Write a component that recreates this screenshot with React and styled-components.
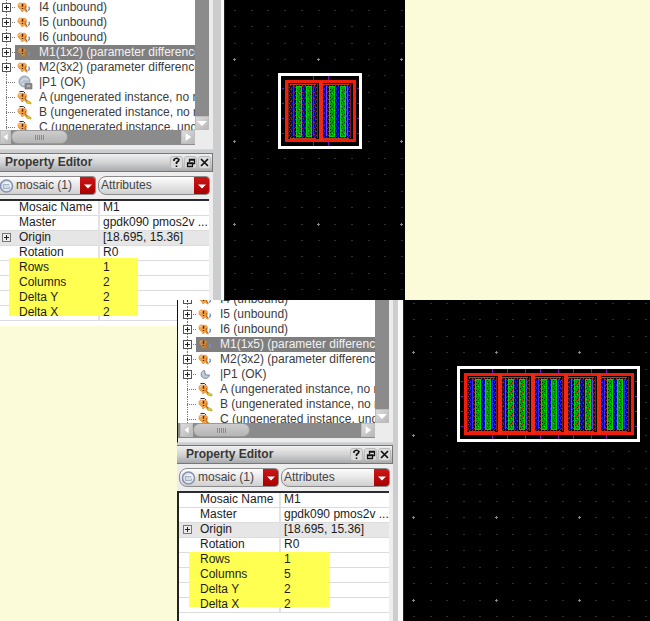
import React from "react";
import styled, { createGlobalStyle, css } from "styled-components";

const GlobalStyle = createGlobalStyle`
  * { box-sizing: border-box; }
  body {
    margin: 0;
    background: #fbfbd9;
    color: #2c2c2c;
    font: 12px/15px "Liberation Sans", Arial, sans-serif;
  }
  button, select { font: inherit; color: inherit; margin: 0; }
`;

const Stage = styled.main`
  display: grid;
  grid-template-columns: 177px 228px 1fr;
  grid-template-rows: auto 26px 1fr;
  min-height: 100vh;
  overflow: hidden;
`;

const Capture = styled.section`
  display: flex;
  min-width: 0;
  isolation: isolate;
  ${(p) =>
    p.$front
      ? css`
          grid-column: 2 / 4;
          grid-row: 2 / 4;
        `
      : css`
          grid-column: 1 / 3;
          grid-row: 1 / 3;
        `}
`;

const Dock = styled.div`
  display: flex;
  flex: none;
  background: #cbcdcf;
  border-right: ${(p) => (p.$front ? "5px solid #fafafa" : "3px solid #fafafa")};
`;

const DockBody = styled.div`
  display: flex;
  flex-direction: column;
  width: ${(p) => (p.$front ? "216px" : "213px")};
  margin-right: ${(p) => (p.$front ? "5px" : "8px")};
`;

const TreePane = styled.div`
  display: grid;
  grid-template-columns: 1fr 14px;
  grid-template-rows: ${(p) => (p.$front ? "123px" : "130px")} 15px;
  padding-right: 4px;
  padding-bottom: 4px;
  background: #ececec;
  border-left: ${(p) => (p.$front ? "1px solid #111" : "0")};
  border-bottom: 1px solid #d6d7d8;
`;

const TreeView = styled.div`
  overflow: hidden;
  background: #fff;
  padding-left: ${(p) => (p.$front ? "3px" : "0")};
`;

const Tree = styled.ul`
  list-style: none;
  margin: ${(p) => (p.$scrolled ? "-8px 0 0" : "0")};
  padding: 0;
`;

const TreeRow = styled.li`
  display: flex;
  height: 15px;
  white-space: nowrap;
`;

const Branch = styled.div`
  flex: none;
  display: flex;
  align-items: center;
  width: 15px;
  padding-left: 2px;
  background:
    repeating-linear-gradient(to bottom, #777 0 1px, transparent 1px 2px) 6px 0 / 1px 100% no-repeat,
    repeating-linear-gradient(to right, #777 0 1px, transparent 1px 2px) 6px 7px / 9px 1px no-repeat;
`;

const PlusButton = styled.button`
  display: block;
  width: 9px;
  height: 9px;
  padding: 0;
  border: 1px solid ${(p) => (p.$soft ? "#777" : "#555")};
  background:
    linear-gradient(#222, #222) center / 5px 1px no-repeat,
    linear-gradient(#222, #222) center / 1px 5px no-repeat,
    ${(p) => (p.$soft ? "#ececec" : "#fff")};
`;

const TreeLabel = styled.div`
  display: flex;
  align-items: center;
  flex: 1;
  gap: 6px;
  padding-left: 2px;
  color: ${(p) => (p.$selected ? "#f2f2f2" : "#3c3c3c")};
  background: ${(p) => (p.$selected ? "#7f7f7f" : "transparent")};
  svg { flex: none; }
`;

const VTrack = styled.div`
  display: flex;
  flex-direction: column;
  justify-content: flex-end;
  background: #8b8b8b;
`;

const HTrack = styled.div`
  display: flex;
  background: #8b8b8b;
  padding-left: ${(p) => (p.$front ? "2px" : "0")};
`;

const ArrowButton = styled.button`
  display: flex;
  flex: none;
  align-items: center;
  justify-content: center;
  width: ${(p) => p.$width || "14px"};
  height: 14px;
  padding: 0;
  border: 1px solid #bdbdbd;
  background: linear-gradient(135deg, #dcdcdc, #b8b8b8);
`;

const Thumb = styled.div`
  display: flex;
  align-items: center;
  justify-content: center;
  gap: 1px;
  width: 57px;
  height: 14px;
  margin-right: auto;
  border: 1px solid #999;
  border-radius: 7px;
  background: linear-gradient(#cdcdcd, #b5b5b5);
  i {
    width: 1px;
    height: 5px;
    background: #8a8a8a;
  }
`;

const TitleBar = styled.header`
  display: flex;
  align-items: center;
  gap: 1px;
  height: 19px;
  margin-top: ${(p) => (p.$front ? "2px" : "3px")};
  padding: 0 1px 0 ${(p) => (p.$front ? "9px" : "5px")};
  border: 1px solid #777;
  border-left: 0;
  background: linear-gradient(#f0f0f0, #d2d3d4 50%, #a9aaab);
  h2 {
    flex: 1;
    margin: 0;
    font-size: 12px;
    line-height: 15px;
    color: #383838;
  }
`;

const TitleButton = styled.button`
  display: flex;
  align-items: center;
  justify-content: center;
  width: 13px;
  height: 13px;
  padding: 0;
  border: 1px solid #bbb;
  border-radius: 3px;
  background: #dcdcdc;
`;

const ComboRow = styled.div`
  display: flex;
  gap: 2px;
  height: 27px;
  padding: 4px 3px 4px ${(p) => (p.$front ? "2px" : "0")};
  background: #ededed;
`;

const Combo = styled.label`
  display: flex;
  align-items: center;
  flex: ${(p) => (p.$wide ? "1" : "none")};
  width: ${(p) => p.$width || "auto"};
  overflow: hidden;
  border: 1px solid #8b8b8b;
  border-left-width: ${(p) => (p.$cut ? "0" : "1px")};
  border-radius: ${(p) => (p.$cut ? "0 4px 4px 0" : "8px 4px 4px 8px")};
  background: linear-gradient(#fdfdfd, #e2e2e2 60%, #d0d0d0);
  padding-left: ${(p) => (p.$indent ? "2px" : "0")};
  svg { flex: none; }
`;

const Select = styled.select`
  flex: 1;
  min-width: 0;
  height: 17px;
  padding: 0 0 0 2px;
  border: 0;
  outline: 0;
  appearance: none;
  background: transparent;
  color: #444;
`;

const RedArrow = styled.span`
  display: flex;
  align-items: center;
  justify-content: center;
  width: 15px;
  height: 17px;
  background: linear-gradient(#cc1717, #a90000);
`;

const TableWrap = styled.div`
  flex: 1;
  position: relative;
  padding-right: 4px;
  padding-bottom: ${(p) => (p.$front ? "0" : "5px")};
  background: #fff;
  border-left: ${(p) => (p.$front ? "2px solid #222" : "0")};
  box-shadow: inset -4px 0 #efefef;
`;

const PropTable = styled.table`
  width: 100%;
  table-layout: fixed;
  border-spacing: 0;
  border-top: 2px solid #2a2a33;
  color: #1c1c1c;
`;

const PropRow = styled.tr`
  height: 15px;
  background: ${(p) => (p.$shaded ? "#e6e6e6" : "#fff")};
  th, td {
    height: 15px;
    padding: 0 0 1px;
    border-bottom: 1px solid #dcdcdc;
    line-height: 13px;
    font-weight: normal;
    text-align: left;
    white-space: nowrap;
  }
  th { width: ${(p) => (p.$front ? "102px" : "100px")}; border-right: 2px solid #e3e3e3; }
  td { padding-left: 3px; }
`;

const NameCell = styled.div`
  display: flex;
  align-items: center;
  gap: 8px;
  height: 13px;
  padding-left: ${(p) => (p.$front ? (p.$plus ? "4px" : "21px") : p.$plus ? "2px" : "19px")};
`;

const CellText = styled.span`
  position: relative;
  z-index: 1;
`;

const Marker = styled.div`
  position: absolute;
  top: ${(p) => (p.$front ? "61px" : "59px")};
  left: ${(p) => (p.$front ? "10px" : "9px")};
  width: ${(p) => (p.$front ? "140px" : "129px")};
  height: ${(p) => (p.$front ? "55px" : "58px")};
  background: #ffff52;
  pointer-events: none;
`;

const Canvas = styled.svg`
  display: block;
  flex: 1;
  min-width: 0;
  width: 0;
  align-self: stretch;
  background: #000;
  border-left: 1px solid #222;
  margin-bottom: ${(p) => (p.$front ? "0" : "26px")};
`;

function InstanceIcon({ warn, dim }) {
  return (
    <svg width="16" height="15" viewBox="0 0 16 15" aria-hidden="true">
      {warn && <path d="M2.500 1.500h4L8 3" stroke="#333" strokeWidth="1" fill="none" />}
      <path
        d="M1 5C1.500 2.500 4 2.500 5.500 3.500 8 2.500 10 4 9.500 6.500L9 8.500 10.500 12 9 12 7.500 10 6 11.500H4.500L4 9.500C2 9 .5 7 1 5Z"
        fill={dim ? "#c48b4a" : "#f5a347"}
        stroke={dim ? "#a4703f" : "#dd8530"}
        strokeWidth=".6"
      />
      <path d="M2 5.500c.5-1.500 1.500-1.500 2.500-1.500" stroke={dim ? "#d9b184" : "#ffe0a8"} fill="none" />
      <path d="M5.500 3.800v3M5.500 8v1" stroke="#552400" strokeWidth="1.400" />
      <path d="M8.500 6 8 9l2 2" stroke="#b9631c" strokeWidth="1" fill="none" />
      {warn ? (
        <path d="m9.500 13 1-2.500 3.500 2v1.500Z" fill="#ecd61a" stroke="#9a8a14" strokeWidth=".6" />
      ) : (
        <path d="M11.500 7c1.300.5 1.300 2.500-.5 3.500" stroke="#7890c4" strokeWidth="1.400" fill="none" />
      )}
    </svg>
  );
}

function PinIcon({ crescent }) {
  return (
    <svg width="16" height="15" viewBox="0 0 16 15" aria-hidden="true">
      {crescent ? (
        <path d="M6.500 3.500c-3 .5-4 3-3 5.500 1.500 3.500 7.500 3 8-1L7.500 8Z" fill="#c3cadc" stroke="#7d879f" />
      ) : (
        <>
          <circle cx="7.500" cy="6.500" r="5.500" fill="#b9c2cf" stroke="#929daf" />
          <path d="M4 7c1-3 5-4 7-2M5 9h4" stroke="#e5eaf2" fill="none" />
          <path d="M8 8.500h7v5.500H8Z" fill="#8b8b8b" stroke="#6c6c6c" strokeWidth=".6" />
          <path d="M10 10h3v2h-3Z" fill="#b7b7b7" />
        </>
      )}
    </svg>
  );
}

function MosaicIcon() {
  return (
    <svg width="14" height="16" viewBox="0 0 14 16" aria-hidden="true">
      <circle cx="6.500" cy="8" r="6" fill="#dfe5ef" stroke="#8592b2" strokeWidth="1.500" />
      <path d="M3.500 6.500h6v4h-6Z" fill="#d3d9e6" stroke="#9aa4ba" strokeWidth=".8" />
      <path d="m5 5.500 5-.5v4" stroke="#fff" fill="none" />
    </svg>
  );
}

const arrows = {
  left: "M7 1v8L2 5Z",
  right: "M2 0v10l7-5Z",
  down: "M0 3h10L5 8Z",
};

function Arrow({ dir, size = 10 }) {
  return (
    <svg width={size} height={size} viewBox="0 0 10 10" aria-hidden="true">
      <path d={arrows[dir]} fill="#fff" />
    </svg>
  );
}

function GridDots({ originX, originY, stepX, stepY }) {
  const dots = [];
  for (let r = -4; r < 60; r++) {
    for (let c = -1; c < 90; c++) {
      const x = Math.round(originX + c * stepX);
      const y = Math.round(originY + r * stepY);
      if (x < 0 || y < 0) continue;
      dots.push(
        r % 5 === 0 && c % 5 === 0 ? (
          <path key={`${r}.${c}`} d={`M${x - 1} ${y}h3v1h-3zM${x} ${y - 1}h1v3h-1z`} fill="#858585" />
        ) : (
          <path key={`${r}.${c}`} d={`M${x} ${y}h2v1h-2z`} fill="#303030" />
        )
      );
    }
  }
  return <g>{dots}</g>;
}

function Textures() {
  return (
    <defs>
      <pattern id="poly" width="6" height="8" patternUnits="userSpaceOnUse">
        <path d="M0 0h6v8h-6z" fill="#00a400" />
        <path d="M1 0h1v1h-1zM3 1h1v1h-1zM1 3h1v1h-1zM4 3h1v1h-1zM2 5h1v1h-1zM0 6h1v1h-1zM4 7h1v1h-1z" fill="#002d00" />
        <path d="M4 0h1v1h-1zM2 2h1v1h-1zM5 5h1v1h-1z" fill="#c02a0c" />
        <path d="M0 1h1v1h-1zM3 4h1v1h-1z" fill="#25d90b" />
      </pattern>
      <pattern id="metal" width="4" height="6" patternUnits="userSpaceOnUse">
        <path d="M0 0h4v6h-4z" fill="#0808a8" />
        <path d="M1 0h1v2h-1zM3 3h1v2h-1z" fill="#2525ff" />
        <path d="M0 3h1v1h-1zM2 4h1v1h-1z" fill="#05001c" />
        <path d="M2 1h1v1h-1z" fill="#a01860" />
      </pattern>
      <pattern id="well" width="3" height="4" patternUnits="userSpaceOnUse">
        <path d="M0 0h3v4h-3z" fill="#140000" />
        <path d="M0 0h1v1h-1zM2 2h1v1h-1z" fill="#a82512" />
      </pattern>
    </defs>
  );
}

function MosaicCell({ x, spread, tint }) {
  const right = 15 + spread;
  return (
    <g transform={`translate(${x} 0)`}>
      <path d="M-7 12h28v53h-28z" fill="url(#well)" />
      <path d="M-6 11.500h26M-6 65.500h26" stroke="#b93c22" />
      <path d="M-7.500 11v54M21.500 11v54" stroke="#79200f" />
      <path d="M-5 13h4v51h-4zM6 13h4v51h-4zM16 13h4v51h-4z" fill="url(#metal)" />
      <path d={`M-2.500 13v50M${right + 2.5} 13v50`} stroke={tint} strokeWidth="1" />
      <rect x=".5" y="13.500" width="5" height="50" fill="url(#poly)" stroke="#00d500" />
      <rect x={10.5 + spread} y="13.500" width="5" height="50" fill="url(#poly)" stroke="#00d500" />
    </g>
  );
}

function Mosaic({ x, y, columns }) {
  const width = 18 + columns * 33;
  const ticks = [];
  for (let i = 0; i < columns - 1; i++) ticks.push(35 + i * 33, 50 + i * 33);
  return (
    <g transform={`translate(${x} ${y})`} shapeRendering="crispEdges">
      <rect width={width} height="76" fill="#000" />
      <path d={ticks.map((t) => `M${t + 0.5} 3v70`).join("")} stroke="#7b10b8" />
      <path d={`M4 15h2M4 30h2M4 45h2M4 60h2M${width - 5} 15h2M${width - 5} 30h2M${width - 5} 45h2M${width - 5} 60h2`} stroke="#7b10b8" />
      <rect x="7" y="7" width={width - 14} height="61" fill="#090000" />
      {Array.from({ length: columns }, (_, i) => (
        <MosaicCell key={i} x={18 + i * 33} spread={i % 2} tint={i % 2 ? "#6e3bff" : "#302cff"} />
      ))}
      <rect x="8.500" y="8.500" width={width - 16} height="59" fill="none" stroke="#f01c0c" strokeWidth="3" />
      {Array.from({ length: columns - 1 }, (_, i) => (
        <path key={i} d={`M${43 + i * 33} 8v60`} stroke="#f02814" strokeWidth="4" />
      ))}
      <rect x="1.500" y="1.500" width={width - 3} height="73" fill="none" stroke="#fff" strokeWidth="3" />
    </g>
  );
}

function TreeItem({ item }) {
  return (
    <TreeRow role="treeitem" aria-selected={!!item.selected}>
      <Branch>{item.plus && <PlusButton type="button" aria-label={`Expand ${item.text}`} />}</Branch>
      <TreeLabel $selected={item.selected}>
        {item.icon === "pin" || item.icon === "crescent" ? (
          <PinIcon crescent={item.icon === "crescent"} />
        ) : (
          <InstanceIcon warn={item.icon === "warn"} dim={item.selected} />
        )}
        <span>{item.text}</span>
      </TreeLabel>
    </TreeRow>
  );
}

function PropertyEditor({ rows, front }) {
  return (
    <>
      <TitleBar $front={front}>
        <h2>Property Editor</h2>
        <TitleButton type="button" aria-label="Help">
          <svg width="9" height="11" viewBox="0 0 9 11">
            <path d="M2 4V2.500Q4.500 0 7 2.500Q7 4 4.500 5.500V7M4.500 8.500v1.500" fill="none" stroke="#111" strokeWidth="1.600" />
          </svg>
        </TitleButton>
        <TitleButton type="button" aria-label="Float">
          <svg width="10" height="10" viewBox="0 0 10 10">
            <path d="M3.500 4V1.500h5v4H7M3 2h6M1.500 5h5v3.500h-5ZM1 5.500h6" fill="none" stroke="#111" strokeWidth="1.300" />
          </svg>
        </TitleButton>
        <TitleButton type="button" aria-label="Close">
          <svg width="9" height="9" viewBox="0 0 9 9">
            <path d="m1 1 7 7M8 1 1 8" stroke="#111" strokeWidth="1.700" />
          </svg>
        </TitleButton>
      </TitleBar>
      <ComboRow $front={front}>
        <Combo $width={front ? "100px" : "96px"} $cut={!front} $indent={front}>
          <MosaicIcon />
          <Select aria-label="Selected objects">
            <option>mosaic (1)</option>
          </Select>
          <RedArrow>
            <Arrow dir="down" size={8} />
          </RedArrow>
        </Combo>
        <Combo $wide>
          <Select aria-label="Property group">
            <option>Attributes</option>
          </Select>
          <RedArrow>
            <Arrow dir="down" size={8} />
          </RedArrow>
        </Combo>
      </ComboRow>
      <TableWrap $front={front}>
        <PropTable>
          <tbody>
            {rows.map(([name, value]) => (
              <PropRow key={name} $shaded={name === "Origin"} $front={front}>
                <th scope="row">
                  <NameCell $plus={name === "Origin"} $front={front}>
                    {name === "Origin" && <PlusButton $soft type="button" aria-label="Expand Origin" />}
                    <CellText>{name}</CellText>
                  </NameCell>
                </th>
                <td>
                  <CellText>{value}</CellText>
                </td>
              </PropRow>
            ))}
          </tbody>
        </PropTable>
        <Marker $front={front} />
      </TableWrap>
    </>
  );
}

function LayoutWindow({ front, tree, rows, columns, place, grid }) {
  return (
    <Capture $front={front}>
      <Dock $front={front}>
        <DockBody $front={front}>
          <TreePane $front={front}>
            <TreeView $front={front}>
              <Tree role="tree" $scrolled={front}>
                {tree.map((item) => (
                  <TreeItem key={item.text} item={item} />
                ))}
              </Tree>
            </TreeView>
            <VTrack>
              <ArrowButton type="button" aria-label="Scroll down">
                <Arrow dir="down" />
              </ArrowButton>
            </VTrack>
            <HTrack $front={front}>
              <ArrowButton type="button" aria-label="Scroll left" $width={front ? "13px" : "11px"}>
                <Arrow dir="left" size={8} />
              </ArrowButton>
              <Thumb>
                <i /><i /><i /><i /><i />
              </Thumb>
              <ArrowButton type="button" aria-label="Scroll right">
                <Arrow dir="right" size={8} />
              </ArrowButton>
            </HTrack>
          </TreePane>
          <PropertyEditor rows={rows} front={front} />
        </DockBody>
      </Dock>
      <Canvas $front={front} role="img" aria-label={`Layout with a 1 by ${columns} mosaic`}>
        <Textures />
        <GridDots {...grid} />
        <Mosaic {...place} columns={columns} />
      </Canvas>
    </Capture>
  );
}

const makeTree = (size, pin) => [
  { text: "I4 (unbound)", plus: true },
  { text: "I5 (unbound)", plus: true },
  { text: "I6 (unbound)", plus: true },
  { text: `M1(1x${size}) (parameter difference`, plus: true, selected: true },
  { text: "M2(3x2) (parameter difference", plus: true },
  { text: "|P1 (OK)", plus: pin === "crescent", icon: pin },
  { text: "A (ungenerated instance, no r", icon: "warn" },
  { text: "B (ungenerated instance, no r", icon: "warn" },
  { text: "C (ungenerated instance, ung", icon: "warn" },
];

const makeRows = (columns) => [
  ["Mosaic Name", "M1"],
  ["Master", "gpdk090 pmos2v ..."],
  ["Origin", "[18.695, 15.36]"],
  ["Rotation", "R0"],
  ["Rows", "1"],
  ["Columns", columns],
  ["Delta Y", "2"],
  ["Delta X", "2"],
];

export default function App() {
  return (
    <>
      <GlobalStyle />
      <Stage>
        <LayoutWindow
          tree={makeTree(2, "pin")}
          rows={makeRows("2")}
          columns={2}
          place={{ x: 53, y: 73 }}
          grid={{ originX: 9, originY: 59, stepX: 16.7, stepY: 16.45 }}
        />
        <LayoutWindow
          front
          tree={makeTree(5, "crescent")}
          rows={makeRows("5")}
          columns={5}
          place={{ x: 53, y: 66 }}
          grid={{ originX: 9, originY: 52, stepX: 16.55, stepY: 16.5 }}
        />
      </Stage>
    </>
  );
}
